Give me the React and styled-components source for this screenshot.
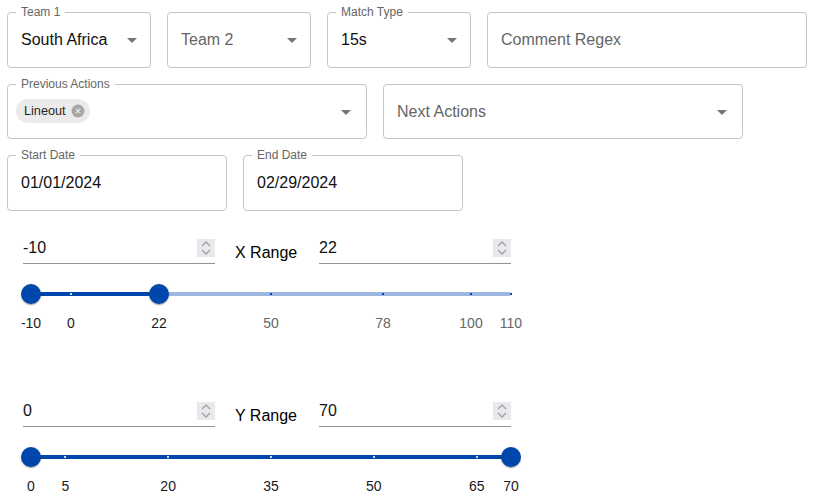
import React from 'react';
import styled, { createGlobalStyle } from 'styled-components';

const GlobalStyle = createGlobalStyle`
  html, body {
    margin: 0;
    padding: 0;
    background: #fff;
    font-family: "Liberation Sans", Arial, sans-serif;
  }
`;

const Page = styled.div`
  display: flex;
  flex-direction: column;
  gap: 16px;
  width: 813px;
  height: 499px;
  padding: 12px 0 0 7px;
  box-sizing: border-box;
  overflow: hidden;
`;

const Row = styled.div`
  display: flex;
  gap: 16px;
`;

const Field = styled.fieldset`
  position: relative;
  display: flex;
  align-items: ${({ $top }) => ($top ? 'flex-start' : 'center')};
  width: ${({ $width }) => $width}px;
  height: ${({ $height }) => $height || 56}px;
  margin: 0;
  padding: ${({ $top }) => ($top ? '14px 0 0 8px' : '0 0 0 13px')};
  border: 1px solid #c4c4c4;
  border-radius: 4px;
  box-sizing: border-box;
  font-size: 16px;
  color: ${({ $muted }) => ($muted ? '#666' : '#111')};
`;

const Legend = styled.legend`
  position: absolute;
  top: -8px;
  left: 8px;
  padding: 0 5px;
  background: #fff;
  font-size: 12px;
  line-height: 14px;
  color: #666;
`;

const Caret = styled.svg`
  position: absolute;
  top: 50%;
  right: ${({ $wide }) => ($wide ? 15 : 13)}px;
  width: 10px;
  height: 5px;
  margin-top: -2px;
  fill: #757575;
`;

const Chip = styled.div`
  display: flex;
  align-items: center;
  height: 24px;
  padding: 0 5px 0 8px;
  gap: 5px;
  border-radius: 12px;
  background: #ebebeb;
  font-size: 12.7px;
  color: #1f1f1f;
`;

const ChipIcon = styled.svg`
  width: 14px;
  height: 14px;
`;

const RangeBlock = styled.section`
  display: flex;
  flex-direction: column;
  width: 504px;
  margin-top: ${({ $gap }) => $gap}px;
  padding-left: 16px;
`;

const InputRow = styled.div`
  display: flex;
  align-items: center;
  gap: 20px;
`;

const NumberBox = styled.div`
  position: relative;
  width: 192px;
`;

const NumberInput = styled.input`
  display: block;
  width: 100%;
  height: 26px;
  padding: 0 0 2px;
  border: none;
  border-bottom: 1px solid #949494;
  border-radius: 0;
  outline: none;
  background: transparent;
  font-family: inherit;
  font-size: 16px;
  color: #111;
  box-sizing: content-box;
  appearance: textfield;

  &::-webkit-inner-spin-button {
    appearance: none;
  }
`;

const Spinner = styled.svg`
  position: absolute;
  top: 4px;
  right: 0;
  width: 18px;
  height: 18px;
  background: #e9e9ed;
  fill: none;
  stroke: #a3a3aa;
  stroke-width: 1.5;
`;

const RangeTitle = styled.div`
  width: 64px;
  margin-top: 6px;
  font-size: 16px;
  white-space: nowrap;
  color: #000;
`;

const Slider = styled.div`
  position: relative;
  width: 480px;
  height: 60px;
  margin: 15px 0 0 8px;
`;

const Rail = styled.div`
  position: absolute;
  top: 13px;
  left: 0;
  right: 0;
  height: 4px;
  border-radius: 2px;
  background: #9db7e0;
`;

const Track = styled.div`
  position: absolute;
  top: 13px;
  height: 4px;
  background: #0047ab;
`;

const Tick = styled.span`
  position: absolute;
  top: 14px;
  width: 2px;
  height: 2px;
  margin-left: -1px;
  background: ${({ $active }) => ($active ? '#cfdcf1' : '#0047ab')};
`;

const Thumb = styled.span`
  position: absolute;
  top: 5px;
  width: 20px;
  height: 20px;
  margin-left: -10px;
  border-radius: 50%;
  background: #0047ab;
  box-shadow: 0 2px 1px -1px rgba(0, 0, 0, 0.2), 0 1px 1px rgba(0, 0, 0, 0.14), 0 1px 3px rgba(0, 0, 0, 0.12);
`;

const MarkLabel = styled.span`
  position: absolute;
  top: 36px;
  font-size: 14px;
  line-height: 16px;
  transform: translateX(-50%);
  white-space: nowrap;
  color: ${({ $active }) => ($active ? '#1a1a1a' : '#666')};
`;

function SelectField({ label, value, placeholder, width, height, wide }) {
  return (
    <Field $width={width} $height={height} $muted={!value}>
      {label && <Legend>{label}</Legend>}
      {value || placeholder}
      <Caret $wide={wide} viewBox="0 0 10 5">
        <path d="M0 0h10L5 5z" />
      </Caret>
    </Field>
  );
}

function NumberField({ value }) {
  return (
    <NumberBox>
      <NumberInput type="number" defaultValue={value} />
      <Spinner viewBox="0 0 18 18">
        <path d="M5 7l4-4 4 4M5 11l4 4 4-4" />
      </Spinner>
    </NumberBox>
  );
}

function RangeSlider({ min, max, low, high, marks }) {
  const pct = (v) => `${((v - min) / (max - min)) * 100}%`;
  const inRange = (v) => v >= low && v <= high;
  return (
    <Slider>
      <Rail />
      <Track style={{ left: pct(low), width: `${((high - low) / (max - min)) * 100}%` }} />
      {marks.map((m) => (
        <React.Fragment key={m}>
          <Tick $active={inRange(m)} style={{ left: pct(m) }} />
          <MarkLabel $active={inRange(m)} style={{ left: pct(m) }}>
            {m}
          </MarkLabel>
        </React.Fragment>
      ))}
      <Thumb style={{ left: pct(low) }} />
      <Thumb style={{ left: pct(high) }} />
    </Slider>
  );
}

function RangeControl({ title, min, max, low, high, marks, gap }) {
  return (
    <RangeBlock $gap={gap}>
      <InputRow>
        <NumberField value={low} />
        <RangeTitle>{title}</RangeTitle>
        <NumberField value={high} />
      </InputRow>
      <RangeSlider min={min} max={max} low={low} high={high} marks={marks} />
    </RangeBlock>
  );
}

export default function App() {
  return (
    <Page>
      <GlobalStyle />
      <Row>
        <SelectField label="Team 1" value="South Africa" width={144} />
        <SelectField placeholder="Team 2" width={144} />
        <SelectField label="Match Type" value="15s" width={144} />
        <Field $width={320} $muted>
          Comment Regex
        </Field>
      </Row>
      <Row>
        <Field $width={360} $height={55} $top>
          <Legend>Previous Actions</Legend>
          <Chip>
            Lineout
            <ChipIcon viewBox="0 0 24 24">
              <circle cx="12" cy="12" r="11" fill="#a6a6a6" />
              <path d="M8 8l8 8M16 8l-8 8" stroke="#ebebeb" strokeWidth="2" fill="none" />
            </ChipIcon>
          </Chip>
          <Caret $wide viewBox="0 0 10 5">
            <path d="M0 0h10L5 5z" />
          </Caret>
        </Field>
        <SelectField placeholder="Next Actions" width={360} height={55} wide />
      </Row>
      <Row>
        <Field $width={220}>
          <Legend>Start Date</Legend>
          01/01/2024
        </Field>
        <Field $width={220}>
          <Legend>End Date</Legend>
          02/29/2024
        </Field>
      </Row>
      <RangeControl title="X Range" min={-10} max={110} low={-10} high={22} marks={[-10, 0, 22, 50, 78, 100, 110]} gap={8} />
      <RangeControl title="Y Range" min={0} max={70} low={0} high={70} marks={[0, 5, 20, 35, 50, 65, 70]} gap={43} />
    </Page>
  );
}
